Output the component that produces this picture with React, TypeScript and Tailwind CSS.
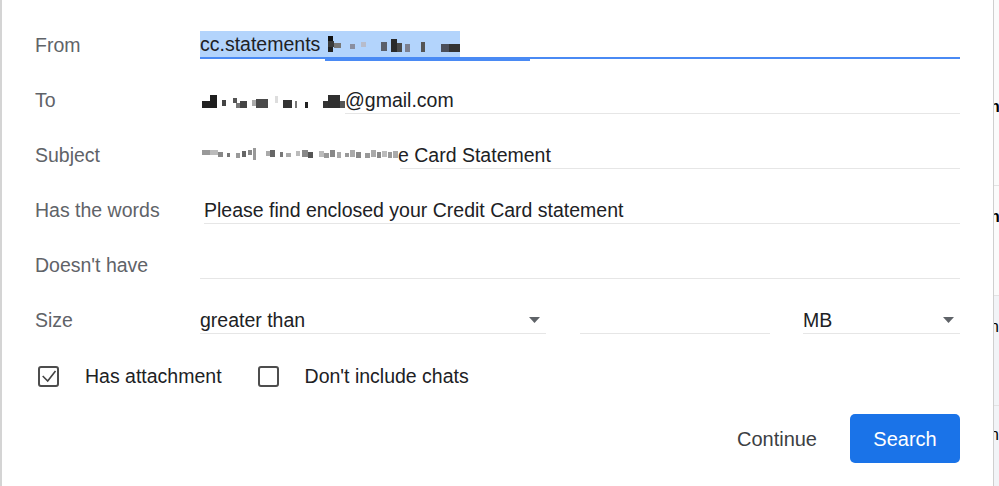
import React from "react";

type B = [number, number, number, number, string];

function Pix({ w, h, blocks, bg }: { w: number; h: number; blocks: B[]; bg?: string }) {
  return (
    <svg width={w} height={h} className="block shrink-0" style={bg ? { background: bg } : undefined}>
      {blocks.map((b, i) => (
        <rect key={i} x={b[0]} y={b[1]} width={b[2]} height={b[3]} fill={b[4]} />
      ))}
    </svg>
  );
}

const fromBlocks: B[] = [
  [8, 5, 5, 5, "#111"],
  [8, 10, 6, 6, "#3a3a3a"],
  [14, 12, 7, 5, "#777"],
  [8, 16, 5, 5, "#222"],
  [30, 13, 5, 5, "#8a8fa0"],
  [41, 11, 5, 5, "#b7bccb"],
  [61, 11, 6, 9, "#5a5f6a"],
  [71, 8, 6, 13, "#2a2a2a"],
  [77, 12, 5, 9, "#4a4a4a"],
  [85, 13, 5, 8, "#7c8090"],
  [101, 11, 4, 10, "#555"],
  [121, 13, 8, 8, "#4b4f5a"],
  [129, 13, 11, 8, "#333"],
];

const toBlocks: B[] = [
  [2, 14, 10, 7, "#222"],
  [10, 8, 7, 13, "#1e1e1e"],
  [22, 13, 4, 6, "#444"],
  [33, 11, 4, 5, "#555"],
  [36, 16, 4, 5, "#777"],
  [40, 14, 7, 7, "#444"],
  [52, 13, 4, 6, "#aaa"],
  [56, 12, 12, 9, "#4a4a4a"],
  [75, 9, 3, 7, "#ddd"],
  [83, 13, 9, 8, "#333"],
  [95, 14, 2, 7, "#777"],
  [105, 15, 3, 6, "#222"],
  [123, 14, 5, 7, "#333"],
  [128, 8, 12, 13, "#2f2f2f"],
  [140, 14, 5, 7, "#555"],
];

const subjBlocks: B[] = [
  [2, 8, 8, 5, "#999"],
  [10, 8, 8, 5, "#bbb"],
  [18, 10, 5, 5, "#888"],
  [27, 11, 3, 4, "#777"],
  [36, 11, 4, 5, "#999"],
  [42, 9, 4, 6, "#666"],
  [48, 8, 4, 5, "#888"],
  [53, 6, 3, 12, "#999"],
  [66, 9, 4, 5, "#aaa"],
  [70, 8, 5, 7, "#666"],
  [80, 10, 3, 5, "#777"],
  [86, 11, 5, 4, "#aaa"],
  [96, 9, 4, 5, "#bbb"],
  [102, 8, 6, 7, "#888"],
  [108, 10, 5, 6, "#555"],
  [119, 9, 5, 6, "#bbb"],
  [124, 11, 5, 5, "#999"],
  [130, 8, 5, 7, "#888"],
  [137, 10, 4, 6, "#aaa"],
  [145, 11, 4, 4, "#999"],
  [150, 8, 5, 7, "#aaa"],
  [156, 10, 5, 6, "#888"],
  [165, 11, 5, 5, "#999"],
  [171, 8, 5, 7, "#aaa"],
  [177, 10, 4, 6, "#888"],
  [182, 9, 5, 6, "#bbb"],
  [188, 10, 4, 6, "#999"],
  [193, 9, 5, 7, "#aaa"],
];

function Row({ label, children }: { label: string; children: React.ReactNode }) {
  return (
    <div className="flex items-end h-[55px]">
      <div className="w-[165px] shrink-0 leading-[26px] pb-px text-[#5f6368]">{label}</div>
      <div className="flex-1 min-w-0">{children}</div>
    </div>
  );
}

function Arrow() {
  return (
    <svg width="11" height="6" viewBox="0 0 11 6" className="shrink-0">
      <path d="M0 0 L11 0 L5.5 6 Z" fill="#5f6368" />
    </svg>
  );
}

function Checkbox({ checked }: { checked?: boolean }) {
  return (
    <div className="w-[21px] h-[21px] border-2 border-[#4d4d4d] rounded-[3px] shrink-0 flex items-center justify-center">
      {checked && (
        <svg width="17" height="17" viewBox="0 0 17 17">
          <path d="M2.7 8 L7.7 13 L15.5 3" fill="none" stroke="#444" strokeWidth="1.6" />
        </svg>
      )}
    </div>
  );
}

export default function App() {
  return (
    <div className="w-[999px] h-[486px] flex bg-white overflow-hidden font-['Liberation_Sans',Arial,sans-serif] text-[19.5px]">
      <div className="w-[993px] shrink-0 border-l-2 border-[#d4d4d4] pl-[33px] pr-[33px] pt-[4px]">
        <Row label="From">
          <div className="relative h-[27px] border-b-2 border-[#4a8af4] flex items-end">
            <div className="flex items-center h-[26px] bg-[#b3d4fc] text-[#202124] leading-[26px]">
              <span>cc.statements</span>
              <Pix w={140} h={26} blocks={fromBlocks} />
            </div>
            <div className="absolute left-[125px] top-[25px] w-[205px] h-[4px] bg-[#4a8af4]" />
          </div>
        </Row>
        <Row label="To">
          <div className="flex items-center h-[27px]">
            <Pix w={145} h={27} blocks={toBlocks} />
            <div className="flex-1 h-[27px] border-b border-[#e6e6e6] leading-[26px] text-[#202124]">@gmail.com</div>
          </div>
        </Row>
        <Row label="Subject">
          <div className="flex items-center h-[27px]">
            <Pix w={198} h={27} blocks={subjBlocks} />
            <div className="flex-1 h-[27px] leading-[26px] text-[#202124] relative">
              <span>e Card Statement</span>
              <div className="absolute left-[2px] right-0 bottom-0 h-px bg-[#e6e6e6]" />
            </div>
          </div>
        </Row>
        <Row label="Has the words">
          <div className="ml-[4px] h-[27px] border-b border-[#e6e6e6] leading-[26px] text-[#202124]">
            Please find enclosed your Credit Card statement
          </div>
        </Row>
        <Row label="Doesn't have">
          <div className="h-[27px] border-b border-[#e6e6e6]" />
        </Row>
        <Row label="Size">
          <div className="flex items-end h-[27px]">
            <div className="w-[346px] h-[27px] border-b border-[#e6e6e6] flex items-center justify-between pr-[6px] leading-[26px] text-[#202124]">
              <span>greater than</span>
              <Arrow />
            </div>
            <div className="ml-[34px] w-[190px] h-[27px] border-b border-[#e6e6e6]" />
            <div className="ml-[33px] flex-1 h-[27px] border-b border-[#e6e6e6] flex items-center justify-between pr-[6px] leading-[26px] text-[#202124]">
              <span>MB</span>
              <Arrow />
            </div>
          </div>
        </Row>
        <div className="flex items-center h-[55px] pt-[29px] pl-[3px] text-[#202124]">
          <Checkbox checked />
          <span className="ml-[26px] leading-[26px]">Has attachment</span>
          <div className="ml-[36px]">
            <Checkbox />
          </div>
          <span className="ml-[26px] leading-[26px]">Don't include chats</span>
        </div>
        <div className="flex justify-end items-center mt-[25px] gap-[33px]">
          <button className="text-[#3c4043] text-[20px] leading-[26px]">Continue</button>
          <button className="w-[110px] h-[49px] rounded-[5px] bg-[#1a73e8] text-white text-[20px]">Search</button>
        </div>
      </div>
      <div className="flex-1 border-l border-[#cfcfcf] flex flex-col overflow-hidden text-[16px] font-bold text-black leading-[16px]">
        <div className="h-[186px] border-b border-[#e3e3e3] pt-[99px] bg-[#fbfbfb]">
          <span className="-ml-[4px] block">n</span>
        </div>
        <div className="h-[110px] border-b border-[#e3e3e3] pt-[23px] bg-[#fbfbfb]">
          <span className="-ml-[4px] block">n</span>
        </div>
        <div className="h-[110px] border-b border-[#e3e3e3] pt-[23px] bg-[#f2f4f7] font-normal">
          <span className="-ml-[4px] block">n</span>
        </div>
        <div className="flex-1 pt-[21px] bg-[#f2f4f7] font-normal">
          <span className="-ml-[4px] block">n</span>
        </div>
      </div>
    </div>
  );
}
